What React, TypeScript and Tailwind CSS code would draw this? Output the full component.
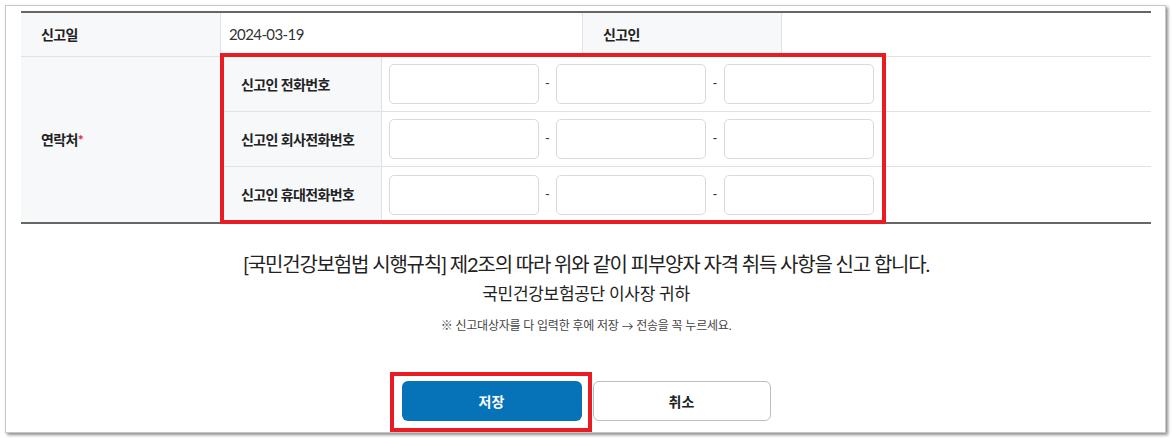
import React from 'react';

const font = { fontFamily: '"Lato", "Noto Sans CJK KR", sans-serif' };

function PhoneRow({ label, last }: { label: string; last?: boolean }) {
  return (
    <div className={`flex h-[55px] ${last ? '' : 'border-b border-[#e2e2e2]'}`}>
      <div className="flex w-[161px] shrink-0 items-center border-r border-[#e2e2e2] bg-[#f7f8fa] pl-5 text-[14px] font-bold tracking-[-0.6px] text-[#222]">
        {label}
      </div>
      <div className="flex items-center pl-[7px]">
        <input className="h-10 w-[150px] rounded-[5px] border border-[#dadada] bg-white outline-none" />
        <span className="w-[17px] text-center text-[13px] text-[#333]">-</span>
        <input className="h-10 w-[150px] rounded-[5px] border border-[#dadada] bg-white outline-none" />
        <span className="w-[18px] text-center text-[13px] text-[#333]">-</span>
        <input className="h-10 w-[150px] rounded-[5px] border border-[#dadada] bg-white outline-none" />
      </div>
    </div>
  );
}

export default function App() {
  return (
    <div className="h-[438px] w-[1172px] bg-white p-[5px]" style={font}>
      <div className="relative h-[428px] w-[1161px] border border-[#c8c8c8] bg-white pl-[15px] pt-[5px] shadow-[2px_2px_3px_rgba(0,0,0,0.45)]">
        {/* table */}
        <div className="w-[1130px] border-y-2 border-[#666]">
          <div className="flex h-[44px] border-b border-[#e2e2e2]">
            <div className="flex w-[200px] items-center border-r border-[#e2e2e2] bg-[#f7f8fa] pl-5 text-[14px] font-bold tracking-[-0.6px] text-[#222]">
              신고일
            </div>
            <div className="flex w-[361px] items-center pl-2 text-[15px] tracking-[-0.6px] text-[#333]">2024-03-19</div>
            <div className="flex w-[200px] items-center border-x border-[#e2e2e2] bg-[#f7f8fa] pl-5 text-[14px] font-bold tracking-[-0.6px] text-[#222]">
              신고인
            </div>
            <div className="flex-1" />
          </div>
          <div className="flex">
            <div className="flex w-[200px] shrink-0 items-center border-r border-[#e2e2e2] bg-[#f7f8fa] pl-5 text-[14px] font-bold tracking-[-0.6px] text-[#222]">
              연락처<span className="text-[#e0202a]">*</span>
            </div>
            <div className="flex-1">
              <PhoneRow label="신고인 전화번호" />
              <PhoneRow label="신고인 회사전화번호" />
              <PhoneRow label="신고인 휴대전화번호" last />
            </div>
          </div>
        </div>

        {/* notice */}
        <div className="mt-[27px] flex w-[1130px] flex-col items-center text-[#222]">
          <p className="text-[20px] leading-[26px] tracking-[-1.2px]">
            [국민건강보험법 시행규칙] 제2조의 따라 위와 같이 피부양자 자격 취득 사항을 신고 합니다.
          </p>
          <p className="mt-[6px] text-[17px] leading-[22px] tracking-[-0.3px]">국민건강보험공단 이사장 귀하</p>
          <p className="mt-[12px] text-[12px] leading-[18px] tracking-[-0.2px] text-[#444]">
            ※ 신고대상자를 다 입력한 후에 저장 → 전송을 꼭 누르세요.
          </p>
        </div>

        <div className="mt-[46px] flex w-[1130px] justify-center gap-[11px]">
          <button className="h-10 w-[180px] rounded-[6px] bg-[#0673b8] text-[14px] font-bold text-white">저장</button>
          <button className="h-10 w-[178px] rounded-[6px] border border-[#bdbdbd] bg-white text-[14px] font-bold text-[#222]">
            취소
          </button>
        </div>

        {/* annotation boxes */}
        <div className="pointer-events-none absolute left-[214px] top-[47px] h-[171px] w-[666px] border-4 border-[#e91c24]" />
        <div className="pointer-events-none absolute left-[384px] top-[366px] h-[60px] w-[202px] border-4 border-[#e91c24]" />
      </div>
    </div>
  );
}
